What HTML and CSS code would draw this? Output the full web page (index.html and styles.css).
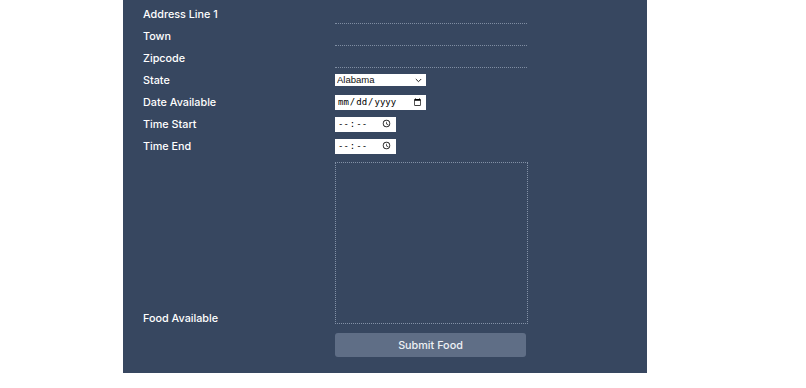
FILE: index.html
```html
<!DOCTYPE html>
<html lang="en-US">
<head>
    <meta charset="UTF-8">
    <meta name="viewport" content="width=device-width, initial-scale=1.0">
    <title>Add Food</title>
    <link rel="stylesheet" href="styles.css">
</head>
<body>
    <div class="panel">
        <form class="food-form" onsubmit="return false">
            <label for="address">Address Line 1</label>
            <input type="text" id="address" class="line-input">

            <label for="town">Town</label>
            <input type="text" id="town" class="line-input">

            <label for="zipcode">Zipcode</label>
            <input type="text" id="zipcode" class="line-input">

            <label for="state">State</label>
            <div class="select-wrap">
                <select id="state" class="small-select">
                    <option>Alabama</option>
                    <option>Alaska</option>
                    <option>Arizona</option>
                    <option>Arkansas</option>
                    <option>California</option>
                </select>
                <svg class="chevron" width="7" height="5" viewBox="0 0 7 5"><path d="M0.8 1 L3.5 3.7 L6.2 1" fill="none" stroke="#222" stroke-width="1"/></svg>
            </div>

            <label for="date">Date Available</label>
            <input type="date" id="date" class="date-input">

            <label for="timeStart">Time Start</label>
            <input type="time" id="timeStart" class="time-input">

            <label for="timeEnd">Time End</label>
            <input type="time" id="timeEnd" class="time-input">

            <label for="food" class="bottom-label">Food Available</label>
            <textarea id="food" class="food-text"></textarea>

            <span></span>
            <button type="submit" class="submit-btn">Submit Food</button>
        </form>
    </div>
</body>
</html>
```

FILE: styles.css
```css
body {
    margin: 0;
    font-family: Inter, Lato, sans-serif;
    background-color: #ffffff;
}

.panel {
    width: 524px;
    margin-left: 123px;
    background-color: #374760;
    padding: 3px 0 16px 0;
}

.food-form {
    display: grid;
    grid-template-columns: 192px 192px;
    grid-auto-rows: minmax(22px, auto);
    align-items: center;
    padding-left: 20px;
}

.food-form label {
    color: #ffffff;
    font-size: 10.8px;
    font-weight: 500;
    line-height: 14px;
    padding-top: 2px;
}

.line-input {
    box-sizing: border-box;
    width: 192px;
    height: 18px;
    margin-top: 2px;
    background: transparent;
    border: none;
    border-bottom: 1px dotted #7f8da2;
    color: #ffffff;
    outline: none;
}

.select-wrap {
    position: relative;
    width: 91px;
    height: 12px;
}

.small-select {
    display: block;
    appearance: none;
    box-sizing: border-box;
    width: 91px;
    height: 12px;
    padding: 0 0 0 2px;
    font-size: 9.5px;
    line-height: 12px;
    font-family: "Liberation Sans", Arial, sans-serif;
    color: #111111;
    border: none;
    border-radius: 0;
    background-color: #ffffff;
}

.chevron {
    position: absolute;
    right: 4px;
    top: 4px;
    pointer-events: none;
}

.date-input,
.time-input {
    box-sizing: border-box;
    height: 15px;
    padding: 0 2px;
    font-size: 9px;
    border: none;
    background-color: #ffffff;
}

.date-input {
    width: 91px;
}

.time-input {
    width: 61px;
}

.food-text {
    box-sizing: border-box;
    width: 193px;
    height: 162px;
    margin-top: 5px;
    background: transparent;
    border: 1px dotted #8391a6;
    color: #ffffff;
    resize: none;
}

.food-form .bottom-label {
    align-self: end;
    margin-bottom: -2px;
}

.submit-btn {
    width: 191px;
    height: 24px;
    margin-top: 9px;
    background-color: #5f6e86;
    color: #eef1f5;
    border: none;
    border-radius: 3px;
    font-family: Inter, Lato, sans-serif;
    font-size: 10.8px;
    font-weight: 500;
}
```
